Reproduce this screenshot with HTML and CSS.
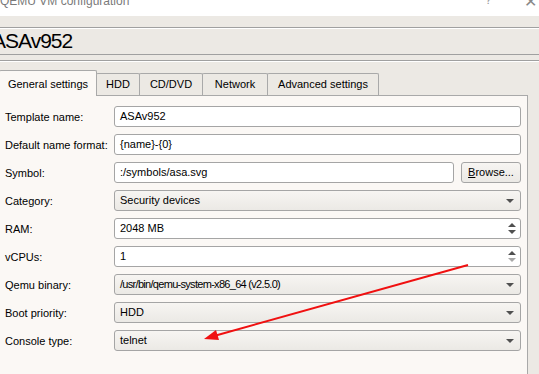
FILE: index.html
```html
<!DOCTYPE html>
<html lang="en">
  <head>
    <meta charset="UTF-8" />
    <title>QEMU VM configuration</title>
    <link rel="stylesheet" href="styles.css">
  </head>
  <body>
    <div class="titlebar">
      <span class="title-text">QEMU VM configuration</span>
      <span class="title-help">?</span>
      <span class="title-close">&#x2715;</span>
    </div>

    <div class="window">
      <!-- Header -->
      <div class="header">
        <div class="header-name">ASAv952</div>
      </div>
      <div class="header-rule"></div>

      <!-- Tabs -->
      <div class="tabs">
        <div class="tab active">General settings</div>
        <div class="tab">HDD</div>
        <div class="tab">CD/DVD</div>
        <div class="tab">Network</div>
        <div class="tab">Advanced settings</div>
      </div>

      <div class="pane">
        <div class="row">
          <label>Template name:</label>
          <div class="field input">ASAv952</div>
        </div>
        <div class="row">
          <label>Default name format:</label>
          <div class="field input">{name}-{0}</div>
        </div>
        <div class="row">
          <label>Symbol:</label>
          <div class="symbol-group">
            <div class="field input">:/symbols/asa.svg</div>
            <div class="button"><u>B</u>rowse...</div>
          </div>
        </div>
        <div class="row">
          <label>Category:</label>
          <div class="field combo">Security devices<span class="arrow"></span></div>
        </div>
        <div class="row">
          <label>RAM:</label>
          <div class="field input spin">2048 MB
            <span class="spin-arrows"><span class="up"></span><span class="down"></span></span>
          </div>
        </div>
        <div class="row">
          <label>vCPUs:</label>
          <div class="field input spin">1
            <span class="spin-arrows"><span class="up"></span><span class="down disabled"></span></span>
          </div>
        </div>
        <div class="row">
          <label>Qemu binary:</label>
          <div class="field combo path">/usr/bin/qemu-system-x86_64 (v2.5.0)<span class="arrow"></span></div>
        </div>
        <div class="row">
          <label>Boot priority:</label>
          <div class="field combo">HDD<span class="arrow"></span></div>
        </div>
        <div class="row">
          <label>Console type:</label>
          <div class="field combo">telnet<span class="arrow"></span></div>
        </div>
      </div>
    </div>

    <!-- annotation arrow drawn over the form -->
    <svg class="annotation" width="539" height="374" viewBox="0 0 539 374">
      <line x1="468" y1="265" x2="214" y2="336" stroke="#f01010" stroke-width="2" />
      <polygon points="204,339 216,330 219,340" fill="#f01010" />
    </svg>
  </body>
</html>
```

FILE: styles.css
```css
* {
  margin: 0;
  padding: 0;
  box-sizing: border-box;
}

body {
  width: 539px;
  height: 374px;
  overflow: hidden;
  background: #ece9e4;
  font-family: 'Liberation Sans', Arial, sans-serif;
  font-size: 11px;
  color: #000;
  position: relative;
}

/* Title bar */
.titlebar {
  height: 16px;
  background: #fff;
  position: relative;
  overflow: hidden;
  color: #7a7a7a;
  font-size: 12px;
}

.title-text {
  position: absolute;
  left: 0;
  top: -6px;
}

.title-help {
  position: absolute;
  left: 485px;
  top: -7px;
  color: #999;
}

.title-close {
  position: absolute;
  left: 524px;
  top: -8px;
  font-size: 16px;
  color: #888;
}

/* Header */
.window {
  padding-top: 11px;
}

.header {
  border-top: 1px solid #a0a0a0;
  border-bottom: 1px solid #a0a0a0;
  box-shadow: inset 0 1px 0 #fff;
  height: 28px;
  overflow: hidden;
}

.header-name {
  font-size: 21px;
  line-height: 26px;
  margin-left: -8px;
  letter-spacing: -1px;
}

.header-rule {
  margin-top: 5px;
  border-top: 1px solid #a0a0a0;
  border-bottom: 1px solid #fff;
}

/* Tabs */
.tabs {
  display: flex;
  align-items: flex-end;
  margin-top: 8px;
  margin-left: -1px;
  height: 25px;
  position: relative;
  z-index: 1;
}

.tab {
  height: 22px;
  padding: 0;
  line-height: 21px;
  text-align: center;
  background: #ece9e4;
  border: 1px solid #a9a9a9;
  border-bottom: none;
  border-radius: 2px 2px 0 0;
  margin-right: -1px;
}

.tab:nth-child(2) { width: 44px; }
.tab:nth-child(3) { width: 64px; }
.tab:nth-child(4) { width: 66px; }
.tab:nth-child(5) { width: 112px; }

.tab.active {
  width: 98px;
  line-height: 27px;
  background: #fbf8f5;
  margin-bottom: -1px;
  height: 26px;
}

.pane {
  margin-left: -1px;
  width: 529px;
  height: 300px;
  background: #fbf8f5;
  border: 1px solid #a9a9a9;
  padding: 10px 6px 0 5px;
  display: flex;
  flex-direction: column;
  gap: 7px;
}

/* Form rows */
.row {
  display: flex;
  align-items: center;
  height: 21px;
}

.row label {
  width: 109px;
  flex-shrink: 0;
  white-space: nowrap;
}

.field {
  flex: 1;
  height: 21px;
  line-height: 19px;
  padding: 0 5px;
  border: 1px solid #a5a5a5;
  border-radius: 3px;
  position: relative;
  white-space: nowrap;
}

.input {
  background: #fff;
}

.combo {
  background: linear-gradient(to bottom, #f7f5f2, #ebe9e5);
}

.path {
  letter-spacing: -0.7px;
}

.arrow {
  position: absolute;
  right: 6px;
  top: 8px;
  width: 0;
  height: 0;
  border-left: 4px solid transparent;
  border-right: 4px solid transparent;
  border-top: 4px solid #505050;
}

.spin-arrows {
  position: absolute;
  right: 0;
  top: 0;
  width: 16px;
  height: 19px;
  display: flex;
  flex-direction: column;
  align-items: center;
  justify-content: center;
  gap: 3px;
}

.spin-arrows .up {
  border-left: 4px solid transparent;
  border-right: 4px solid transparent;
  border-bottom: 4px solid #505050;
}

.spin-arrows .down {
  border-left: 4px solid transparent;
  border-right: 4px solid transparent;
  border-top: 4px solid #505050;
}

.spin-arrows .down.disabled {
  border-top-color: #a8a8a8;
}

.symbol-group {
  flex: 1;
  display: flex;
  gap: 7px;
}

.button {
  width: 60px;
  height: 21px;
  line-height: 19px;
  text-align: center;
  border: 1px solid #a5a5a5;
  border-radius: 3px;
  background: linear-gradient(to bottom, #f7f5f2, #ebe9e5);
}

.button u {
  text-decoration: underline;
}

/* Annotation overlay */
.annotation {
  position: absolute;
  left: 0;
  top: 0;
  pointer-events: none;
}
```
